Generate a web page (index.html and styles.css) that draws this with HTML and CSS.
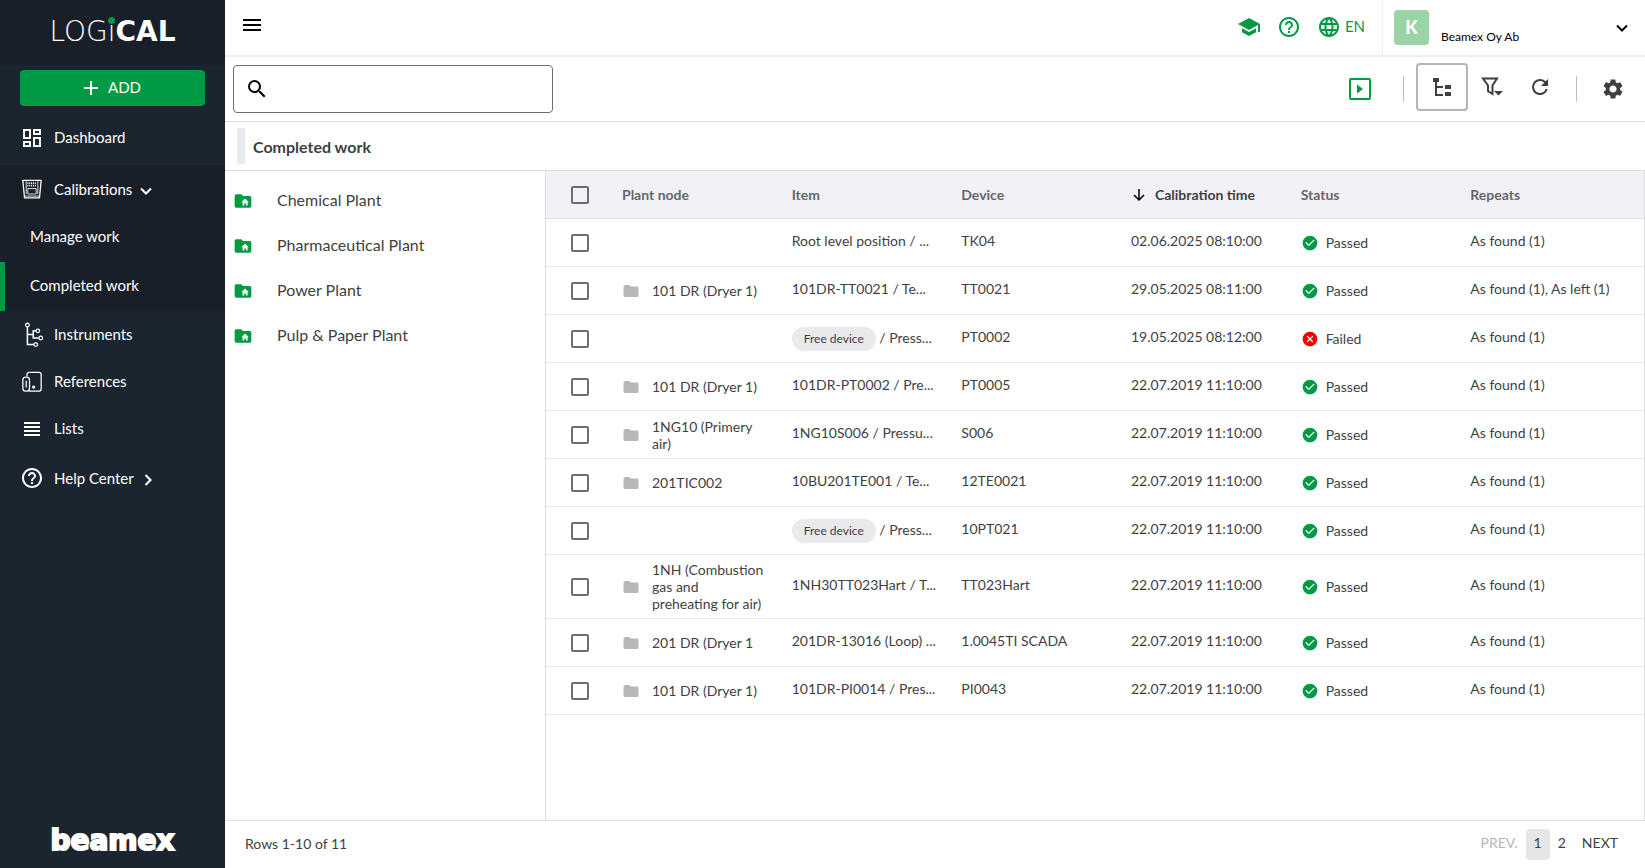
FILE: index.html
```html
<!DOCTYPE html>
<html lang="en">
<head>
	<meta charset="UTF-8">
	<title>LOGiCAL - Completed work</title>
	<link rel="stylesheet" href="styles.css">
</head>
<body>
	<svg class="sprite" aria-hidden="true">
		<symbol id="help" viewBox="0 0 24 24"><path d="M11 18h2v-2h-2v2zm1-16C6.48 2 2 6.48 2 12s4.48 10 10 10 10-4.48 10-10S17.52 2 12 2zm0 18c-4.41 0-8-3.59-8-8s3.59-8 8-8 8 3.59 8 8-3.59 8-8 8zm0-14c-2.21 0-4 1.79-4 4h2c0-1.1.9-2 2-2s2 .9 2 2c0 2-3 1.75-3 5h2c0-2.25 3-2.5 3-5 0-2.21-1.79-4-4-4z"/></symbol>
		<symbol id="folder" viewBox="0 0 24 24"><path d="M10 4H4c-1.1 0-1.99.9-1.99 2L2 18c0 1.1.9 2 2 2h16c1.1 0 2-.9 2-2V8c0-1.1-.9-2-2-2h-8l-2-2z"/></symbol>
		<symbol id="folder-home" viewBox="0 0 24 24"><path fill-rule="evenodd" d="M10 4H4c-1.1 0-1.99.9-1.99 2L2 18c0 1.1.9 2 2 2h16c1.1 0 2-.9 2-2V8c0-1.1-.9-2-2-2h-8l-2-2zM14.500 9l4.500 4.500h-1.500v4h-2V15h-2v2.500h-2v-4H10z"/></symbol>
		<symbol id="passed" viewBox="0 0 24 24"><path d="M12 1C5.900 1 1 5.900 1 12s4.900 11 11 11 11-4.900 11-11S18.100 1 12 1zm-2 16l-5-5 1.410-1.410L10 14.170l7.590-7.590L19 8l-9 9z"/></symbol>
		<symbol id="failed" viewBox="0 0 24 24"><path d="M12 1C5.900 1 1 5.900 1 12s4.900 11 11 11 11-4.900 11-11S18.100 1 12 1zm5 14.590L15.590 17 12 13.410 8.410 17 7 15.590 10.590 12 7 8.410 8.410 7 12 10.590 15.590 7 17 8.410 13.410 12 17 15.590z"/></symbol>
		<symbol id="chevron" viewBox="0 0 12 12"><path d="M1 3.500l5 5 5-5" fill="none" stroke="currentColor" stroke-width="2"/></symbol>
	</svg>

	<aside class="sidebar">
		<a class="logo" href="#"><span class="light">LOG</span><span class="logo-i">i</span><b>CAL</b></a>
		<div class="add">
			<button class="add-btn" type="button">
				<svg width="14" height="14" viewBox="0 0 14 14"><path d="M7 0v14M0 7h14" stroke="currentColor" stroke-width="2"/></svg>
				ADD
			</button>
		</div>
		<nav>
			<a class="nav-link first" href="#">
				<svg class="nav-icon" viewBox="2 2 20 20"><path d="M19 5v2h-4V5h4M9 5v6H5V5h4m10 8v6h-4v-6h4M9 17v2H5v-2h4M21 3h-8v6h8V3zM11 3H3v10h8V3zm10 8h-8v10h8V11zm-10 4H3v6h8v-6z"/></svg>
				Dashboard
			</a>
			<div class="group">
				<a class="nav-link" href="#">
					<svg class="nav-icon line" viewBox="0 0 24 24">
						<path d="M1 1.500h22l-2 21H3z" stroke-width="1.500"/>
						<path d="M5 2v16M19 2v16M7 11.500h10v6.500H7zM3 20.500h18"/>
						<path d="M6.500 5h11M6.500 8h11" stroke-width="2" stroke-dasharray="1.200 1"/>
					</svg>
					Calibrations
					<svg class="chev" viewBox="0 0 12 12"><use href="#chevron"/></svg>
				</a>
				<a class="sub-link" href="#">Manage work</a>
				<a class="sub-link active" href="#">Completed work</a>
			</div>
			<a class="nav-link" href="#">
				<svg class="nav-icon line" viewBox="0 0 24 24" stroke-width="1.500">
					<circle cx="6.500" cy="0" r="2.200"/><circle cx="19" cy="7" r="2.200"/><circle cx="22.500" cy="15.500" r="2.200"/><circle cx="16.500" cy="23.500" r="2.200"/>
					<path d="M6.500 2.200v21.300h7.800M6.500 11.500h7v4h6.800M13.500 11.500V7h3.300" stroke-width="1.800"/>
				</svg>
				Instruments
			</a>
			<a class="nav-link" href="#">
				<svg class="nav-icon line" viewBox="0 0 24 24" stroke-width="1.500">
					<path d="M6 5V3q0-2.500 2.500-2.500H20.500q2.500 0 2.500 2.500v17.500q0 2.500-2.500 2.500H8"/>
					<rect x="1" y="6" width="8" height="17" rx="3.500"/>
					<path d="M5 10.500v8"/>
					<circle cx="14" cy="18" r="1.200" fill="currentColor"/>
				</svg>
				References
			</a>
			<a class="nav-link" href="#">
				<svg class="nav-icon" viewBox="0 0 20 20"><path d="M2 3h16v2H2zM2 7h16v2H2zM2 11h16v2H2zM2 15h16v2H2z"/></svg>
				Lists
			</a>
			<a class="nav-link help" href="#">
				<svg class="nav-icon" viewBox="2 2 20 20"><use href="#help" width="24" height="24"/></svg>
				Help Center
				<svg class="chev right" viewBox="0 0 12 12"><use href="#chevron"/></svg>
			</a>
		</nav>
		<div class="brand">beamex</div>
	</aside>

	<div class="page">
		<header class="topbar">
			<button class="icon-btn menu" type="button" aria-label="Menu">
				<svg width="24" height="24" viewBox="0 0 24 24"><path d="M3 18h18v-2H3v2zm0-5h18v-2H3v2zm0-7v2h18V6H3z"/></svg>
			</button>
			<div class="top-icons">
				<a href="#" aria-label="Academy"><svg width="24" height="24" viewBox="0 0 24 24"><path d="M5 13.180v4L12 21l7-3.820v-4L12 17l-7-3.820zM12 3 1 9l11 6 9-4.910V17h2V9L12 3z"/></svg></a>
				<a href="#" aria-label="Help"><svg width="24" height="24"><use href="#help"/></svg></a>
				<a href="#"><svg width="24" height="24" viewBox="0 0 24 24"><path d="M11.990 2C6.470 2 2 6.480 2 12s4.470 10 9.990 10C17.520 22 22 17.520 22 12S17.520 2 11.990 2zm6.930 6h-2.950a15.650 15.650 0 0 0-1.380-3.560A8.030 8.030 0 0 1 18.920 8zM12 4.040c.83 1.200 1.480 2.530 1.910 3.960h-3.820c.43-1.430 1.080-2.760 1.910-3.960zM4.260 14C4.100 13.360 4 12.690 4 12s.1-1.360.26-2h3.380c-.08.66-.14 1.320-.14 2s.06 1.340.14 2H4.260zm.82 2h2.950c.32 1.250.78 2.450 1.380 3.560A7.987 7.987 0 0 1 5.080 16zm2.950-8H5.080a7.987 7.987 0 0 1 4.330-3.560A15.650 15.650 0 0 0 8.030 8zM12 19.960c-.83-1.200-1.480-2.530-1.910-3.960h3.820c-.43 1.430-1.080 2.760-1.910 3.960zM14.340 14H9.660c-.09-.66-.16-1.320-.16-2s.07-1.350.16-2h4.680c.09.65.16 1.320.16 2s-.07 1.340-.16 2zm.25 5.560c.6-1.110 1.060-2.310 1.380-3.560h2.950a8.030 8.030 0 0 1-4.330 3.560zM16.360 14c.08-.66.14-1.320.14-2s-.06-1.340-.14-2h3.380c.16.64.26 1.310.26 2s-.1 1.360-.26 2h-3.380z"/></svg><span>EN</span></a>
			</div>
			<button class="account" type="button">
				<span class="avatar">K</span>
				<span class="company">Beamex Oy Ab</span>
				<svg class="chev" viewBox="0 0 12 12"><use href="#chevron"/></svg>
			</button>
		</header>

		<div class="toolbar">
			<label class="search">
				<svg width="24" height="24" viewBox="0 0 24 24"><path d="M15.500 14h-.79l-.28-.27A6.471 6.471 0 0 0 16 9.500 6.500 6.500 0 1 0 9.500 16c1.610 0 3.090-.59 4.230-1.570l.27.28v.79l5 4.990L20.490 19l-4.990-5zm-6 0C7.010 14 5 11.990 5 9.500S7.010 5 9.500 5 14 7.010 14 9.500 11.990 14 9.500 14z"/></svg>
				<input type="text" aria-label="Search">
			</label>
			<div class="tools">
				<button class="icon-btn play" type="button" aria-label="Video">
					<svg width="24" height="24" viewBox="0 0 24 24"><rect x="2" y="2" width="20" height="20" rx="1" fill="none" stroke="currentColor" stroke-width="2"/><path d="M9 7.500v9l6-4.500z"/></svg>
				</button>
				<span class="sep"></span>
				<div class="view-tools">
					<button class="icon-btn tree-btn" type="button" aria-label="Tree view">
						<svg width="20" height="20" viewBox="0 0 20 20"><path d="M1 1h6v4H1zM13 8h6v4h-6zM13 15h6v4h-6zM3 5h2v4h6v2H5v6h6v2H3z"/></svg>
					</button>
					<button class="icon-btn" type="button" aria-label="Filter">
						<svg width="24" height="24" viewBox="0 0 24 24"><path d="M3 3.500h14l-4.500 7V19l-4.500-3v-5.500z" fill="none" stroke="currentColor" stroke-width="2"/><path d="M14 16h9l-4.500 4.500z"/></svg>
					</button>
					<button class="icon-btn" type="button" aria-label="Refresh">
						<svg width="24" height="24" viewBox="0 0 24 24"><path d="M17.650 6.350A7.958 7.958 0 0 0 12 4a8 8 0 1 0 7.730 10h-2.080A5.990 5.990 0 1 1 12 6c1.660 0 3.140.69 4.220 1.780L13 11h7V4l-2.350 2.350z"/></svg>
					</button>
				</div>
				<span class="sep"></span>
				<button class="icon-btn settings" type="button" aria-label="Settings">
					<svg width="24" height="24" viewBox="0 0 24 24"><path d="M19.140 12.940c.04-.3.06-.61.06-.94 0-.32-.02-.64-.07-.94l2.030-1.580a.49.49 0 0 0 .12-.61l-1.920-3.320a.488.488 0 0 0-.59-.22l-2.390.96c-.5-.38-1.030-.7-1.620-.94l-.36-2.540a.484.484 0 0 0-.48-.41h-3.840c-.24 0-.43.17-.47.41l-.36 2.540c-.59.24-1.130.57-1.620.94l-2.390-.96c-.22-.08-.47 0-.59.22L2.740 8.870c-.12.21-.08.47.12.61l2.030 1.580c-.05.3-.09.63-.09.94s.02.64.07.94l-2.030 1.580a.49.49 0 0 0-.12.61l1.920 3.320c.12.22.37.29.59.22l2.390-.96c.5.38 1.030.7 1.620.94l.36 2.540c.05.24.24.41.48.41h3.840c.24 0 .44-.17.47-.41l.36-2.540c.59-.24 1.130-.56 1.620-.94l2.390.96c.22.08.47 0 .59-.22l1.920-3.320c.12-.22.07-.47-.12-.61l-2.010-1.580zM12 15.600c-1.980 0-3.600-1.620-3.600-3.600s1.620-3.600 3.600-3.600 3.600 1.620 3.600 3.600-1.620 3.600-3.600 3.600z"/></svg>
				</button>
			</div>
		</div>

		<div class="title"><h1>Completed work</h1></div>

		<div class="content">
			<ul class="tree">
				<li><a href="#"><svg><use href="#folder-home"/></svg><span>Chemical Plant</span></a></li>
				<li><a href="#"><svg><use href="#folder-home"/></svg><span>Pharmaceutical Plant</span></a></li>
				<li><a href="#"><svg><use href="#folder-home"/></svg><span>Power Plant</span></a></li>
				<li><a href="#"><svg><use href="#folder-home"/></svg><span>Pulp &amp; Paper Plant</span></a></li>
			</ul>
			<div class="list">
				<table>
					<colgroup><col class="col-check"><col><col><col><col><col><col><col class="col-end"></colgroup>
					<thead>
						<tr>
							<th class="check"><input type="checkbox" aria-label="Select all"></th>
							<th>Plant node</th>
							<th>Item</th>
							<th>Device</th>
							<th class="sorted"><svg width="12" height="12" viewBox="0 0 12 12"><path d="M6 0v11M1 6l5 5 5-5" fill="none" stroke="currentColor" stroke-width="1.500"/></svg>Calibration time</th>
							<th>Status</th>
							<th>Repeats</th>
							<th></th>
						</tr>
					</thead>
					<tbody>
						<tr>
							<td class="check"><input type="checkbox" aria-label="Select TK04"></td>
							<td></td>
							<td class="txt">Root level position / ...</td>
							<td class="txt">TK04</td>
							<td class="txt">02.06.2025 08:10:00</td>
							<td><div class="status"><svg><use href="#passed"/></svg>Passed</div></td>
							<td class="txt">As found (1)</td>
							<td></td>
						</tr>
						<tr>
							<td class="check"><input type="checkbox" aria-label="Select TT0021"></td>
							<td><div class="node"><svg><use href="#folder"/></svg><span>101 DR (Dryer 1)</span></div></td>
							<td class="txt">101DR-TT0021 / Te...</td>
							<td class="txt">TT0021</td>
							<td class="txt">29.05.2025 08:11:00</td>
							<td><div class="status"><svg><use href="#passed"/></svg>Passed</div></td>
							<td class="txt">As found (1), As left (1)</td>
							<td></td>
						</tr>
						<tr>
							<td class="check"><input type="checkbox" aria-label="Select PT0002"></td>
							<td></td>
							<td><span class="tag">Free device</span> / Press...</td>
							<td class="txt">PT0002</td>
							<td class="txt">19.05.2025 08:12:00</td>
							<td><div class="status failed"><svg><use href="#failed"/></svg>Failed</div></td>
							<td class="txt">As found (1)</td>
							<td></td>
						</tr>
						<tr>
							<td class="check"><input type="checkbox" aria-label="Select PT0005"></td>
							<td><div class="node"><svg><use href="#folder"/></svg><span>101 DR (Dryer 1)</span></div></td>
							<td class="txt">101DR-PT0002 / Pre...</td>
							<td class="txt">PT0005</td>
							<td class="txt">22.07.2019 11:10:00</td>
							<td><div class="status"><svg><use href="#passed"/></svg>Passed</div></td>
							<td class="txt">As found (1)</td>
							<td></td>
						</tr>
						<tr>
							<td class="check"><input type="checkbox" aria-label="Select S006"></td>
							<td><div class="node"><svg><use href="#folder"/></svg><span>1NG10 (Primery air)</span></div></td>
							<td class="txt">1NG10S006 / Pressu...</td>
							<td class="txt">S006</td>
							<td class="txt">22.07.2019 11:10:00</td>
							<td><div class="status"><svg><use href="#passed"/></svg>Passed</div></td>
							<td class="txt">As found (1)</td>
							<td></td>
						</tr>
						<tr>
							<td class="check"><input type="checkbox" aria-label="Select 12TE0021"></td>
							<td><div class="node"><svg><use href="#folder"/></svg><span>201TIC002</span></div></td>
							<td class="txt">10BU201TE001 / Te...</td>
							<td class="txt">12TE0021</td>
							<td class="txt">22.07.2019 11:10:00</td>
							<td><div class="status"><svg><use href="#passed"/></svg>Passed</div></td>
							<td class="txt">As found (1)</td>
							<td></td>
						</tr>
						<tr>
							<td class="check"><input type="checkbox" aria-label="Select 10PT021"></td>
							<td></td>
							<td><span class="tag">Free device</span> / Press...</td>
							<td class="txt">10PT021</td>
							<td class="txt">22.07.2019 11:10:00</td>
							<td><div class="status"><svg><use href="#passed"/></svg>Passed</div></td>
							<td class="txt">As found (1)</td>
							<td></td>
						</tr>
						<tr>
							<td class="check"><input type="checkbox" aria-label="Select TT023Hart"></td>
							<td><div class="node"><svg><use href="#folder"/></svg><span>1NH (Combustion gas and preheating for air)</span></div></td>
							<td class="txt">1NH30TT023Hart / T...</td>
							<td class="txt">TT023Hart</td>
							<td class="txt">22.07.2019 11:10:00</td>
							<td><div class="status"><svg><use href="#passed"/></svg>Passed</div></td>
							<td class="txt">As found (1)</td>
							<td></td>
						</tr>
						<tr>
							<td class="check"><input type="checkbox" aria-label="Select 1.0045TI SCADA"></td>
							<td><div class="node"><svg><use href="#folder"/></svg><span>201 DR (Dryer 1</span></div></td>
							<td class="txt">201DR-13016 (Loop) ...</td>
							<td class="txt">1.0045TI SCADA</td>
							<td class="txt">22.07.2019 11:10:00</td>
							<td><div class="status"><svg><use href="#passed"/></svg>Passed</div></td>
							<td class="txt">As found (1)</td>
							<td></td>
						</tr>
						<tr>
							<td class="check"><input type="checkbox" aria-label="Select PI0043"></td>
							<td><div class="node"><svg><use href="#folder"/></svg><span>101 DR (Dryer 1)</span></div></td>
							<td class="txt">101DR-PI0014 / Pres...</td>
							<td class="txt">PI0043</td>
							<td class="txt">22.07.2019 11:10:00</td>
							<td><div class="status"><svg><use href="#passed"/></svg>Passed</div></td>
							<td class="txt">As found (1)</td>
							<td></td>
						</tr>
					</tbody>
				</table>
			</div>
		</div>

		<footer class="footer">
			<span class="rows">Rows 1-10 of 11</span>
			<div class="pager">
				<button type="button" disabled>PREV.</button>
				<button class="current" type="button">1</button>
				<button type="button">2</button>
				<button type="button">NEXT</button>
			</div>
		</footer>
	</div>
</body>
</html>
```
FILE: styles.css
```css
*{
	box-sizing: border-box;
}

body{
	margin: 0;
	display: flex;
	min-height: 100vh;
	font-family: Lato, "Liberation Sans", sans-serif;
	font-size: 14px;
	line-height: 17px;
	color: #3f3f42;
	background: #fff;
}

a{
	color: inherit;
	text-decoration: none;
}

button, input{
	font: inherit;
	color: inherit;
}

button{
	padding: 0;
	border: 0;
	background: none;
	cursor: pointer;
}

svg{
	display: block;
	flex: none;
	fill: currentColor;
}

.sprite{
	position: absolute;
	width: 0;
	height: 0;
}

/* sidebar */
.sidebar{
	flex: none;
	width: 225px;
	display: flex;
	flex-direction: column;
	color: #fff;
	background: #1b252f;
}

.logo{
	display: flex;
	justify-content: center;
	align-items: baseline;
	height: 65px;
	font-family: "DejaVu Sans", sans-serif;
	font-size: 28px;
	line-height: 63px;
	background: #181f28;
}

.logo .light, .logo-i{
	font-weight: 200;
}

.logo-i{
	position: relative;
}

.logo-i::after{
	content: "";
	position: absolute;
	left: 0;
	top: 17px;
	width: 7px;
	height: 7px;
	border-radius: 50%;
	background: #009a44;
}

.add{
	padding: 5px 20px 8px;
}

.add-btn{
	display: flex;
	align-items: center;
	justify-content: center;
	gap: 10px;
	width: 100%;
	height: 36px;
	padding-bottom: 1px;
	border-radius: 4px;
	font-size: 15px;
	background: #009a44;
}

.nav-link, .sub-link{
	display: flex;
	align-items: center;
	font-size: 15px;
}

.nav-link{
	gap: 12px;
	height: 47px;
	padding-left: 22px;
}

.nav-link.first{
	height: 51px;
	padding-bottom: 4px;
}

.nav-link.help{
	height: 52px;
}

.nav-icon{
	width: 20px;
	height: 20px;
	overflow: visible;
}

.nav-icon.line{
	fill: none;
	stroke: currentColor;
}

.nav-link .chev{
	margin-left: -4px;
	margin-top: 3px;
}

.group{
	background: #181f28;
}

.sub-link{
	height: 49px;
	padding: 0 0 2px 25px;
	border-left: 5px solid transparent;
}

.group .nav-link{
	height: 48px;
}

.sub-link.active{
	border-color: #009a44;
}

.chev{
	width: 12px;
	height: 12px;
}

.chev.right{
	transform: rotate(-90deg);
}

.brand{
	margin: auto 0 11px;
	text-align: center;
	font-family: "DejaVu Sans", sans-serif;
	font-weight: bold;
	font-size: 28px;
	line-height: 32px;
	-webkit-text-stroke: 2px #fff;
}

/* top bar */
.page{
	flex: 1;
	min-width: 0;
	display: flex;
	flex-direction: column;
}

.topbar{
	display: flex;
	height: 57px;
	border-bottom: 2px solid #eee;
}

.icon-btn{
	display: flex;
	align-items: center;
	justify-content: center;
}

.menu{
	margin: 13px 15px;
	height: 24px;
	color: #000;
}

.top-icons{
	display: flex;
	align-items: center;
	gap: 16px;
	margin-left: auto;
	padding: 0 17px 2px 0;
	color: #009a44;
	font-size: 15px;
}

.top-icons a{
	display: flex;
	align-items: center;
	gap: 4px;
}

.account{
	display: flex;
	align-items: center;
	width: 263px;
	padding: 0 17px 0 11px;
	border-left: 1px solid #eee;
	font-size: 12px;
	color: #000;
}

.avatar{
	width: 35px;
	height: 35px;
	border-radius: 4px;
	font-size: 18px;
	font-weight: 900;
	line-height: 35px;
	color: #fff;
	background: #99d3a6;
}

.company{
	margin: 18px auto 0 12px;
}

/* toolbar */
.toolbar{
	display: flex;
	align-items: center;
	justify-content: space-between;
	height: 65px;
	padding: 0 20px 0 8px;
	border-bottom: 1px solid #dedee2;
}

.search{
	display: flex;
	align-items: center;
	width: 320px;
	height: 48px;
	padding-left: 11px;
	border: 1px solid #6f6f73;
	border-radius: 4px;
	color: #000;
}

.search input{
	flex: 1;
	min-width: 0;
	height: 44px;
	border: 0;
	outline: 0;
	background: none;
}

.tools, .view-tools{
	display: flex;
	align-items: center;
}

.view-tools{
	margin-bottom: 4px;
}

.tools .icon-btn{
	width: 48px;
	height: 48px;
}

.tools .play{
	color: #009a44;
}

.tools .tree-btn{
	width: 52px;
	border: 2px solid #b5b5b8;
	border-radius: 4px;
}

.tools .settings{
	width: 24px;
}

.sep{
	width: 1px;
	height: 26px;
	margin: 0 12px 0 19px;
	background: #bdbdc0;
}

.sep:last-of-type{
	margin: 0 24px 0 12px;
}

.title{
	display: flex;
	align-items: center;
	height: 49px;
	padding-left: 12px;
	border-bottom: 1px solid #dedee2;
}

.title h1{
	height: 36px;
	margin: 0;
	padding-left: 8px;
	border-left: 8px solid #e9e9ee;
	font-size: 16px;
	line-height: 38px;
}

/* plant tree and work list */
.content{
	flex: 1;
	display: flex;
}

.tree{
	flex: none;
	width: 320px;
	margin: 0;
	padding: 7px 0;
	list-style: none;
	font-size: 16px;
}

.tree a{
	display: flex;
	align-items: center;
	gap: 24px;
	height: 45px;
	padding-left: 8px;
}

.tree span{
	padding-bottom: 2px;
}

.tree svg{
	width: 20px;
	height: 20px;
	color: #009a44;
}

.list{
	flex: 1;
	min-width: 0;
	border: 1px solid #dedee2;
	border-width: 0 1px;
}

table{
	width: 100%;
	table-layout: fixed;
	border-spacing: 0;
}

.col-check{
	width: 60px;
}

.col-end{
	width: 20px;
}

th, td{
	height: 48px;
	padding: 6px 8px 6px 16px;
	border-bottom: 1px solid #e9e9ec;
	text-align: left;
	white-space: nowrap;
}

th{
	border-color: #dedee2;
	color: #66666a;
	background: #f2f2f6;
}

th.sorted{
	color: #3f3f42;
}

.sorted svg{
	display: inline-block;
	margin: 0 10px 0 2px;
	vertical-align: -1px;
	color: #000;
}

.check{
	padding: 0 0 0 25px;
}

input[type="checkbox"]{
	display: block;
	appearance: none;
	width: 18px;
	height: 18px;
	margin: 0;
	border: 2px solid #6f6f73;
	border-radius: 2px;
}

.txt{
	padding-bottom: 10px;
}

.node, .status{
	display: flex;
	align-items: center;
	gap: 12px;
	white-space: normal;
}

.node svg{
	width: 18px;
	height: 18px;
	color: #b8b8ba;
}

.status{
	gap: 8px;
	padding-left: 1px;
}

.status svg{
	width: 16px;
	height: 16px;
	color: #009a44;
}

.status.failed svg{
	color: #f00000;
}

.tag{
	display: inline-block;
	padding: 0 12px;
	border-radius: 12px;
	font-size: 12px;
	line-height: 24px;
	background: #e9e9ee;
}

/* footer */
.footer{
	display: flex;
	align-items: center;
	justify-content: space-between;
	height: 48px;
	padding: 0 19px 0 20px;
	border-top: 1px solid #dedee2;
}

.rows{
	padding-bottom: 2px;
}

.pager{
	display: flex;
}

.pager button{
	height: 31px;
	padding: 0 8px 4px;
	border-radius: 4px;
}

.pager button:disabled{
	color: #b5b5b8;
}

.pager .current{
	background: #e6e6e6;
}
```
